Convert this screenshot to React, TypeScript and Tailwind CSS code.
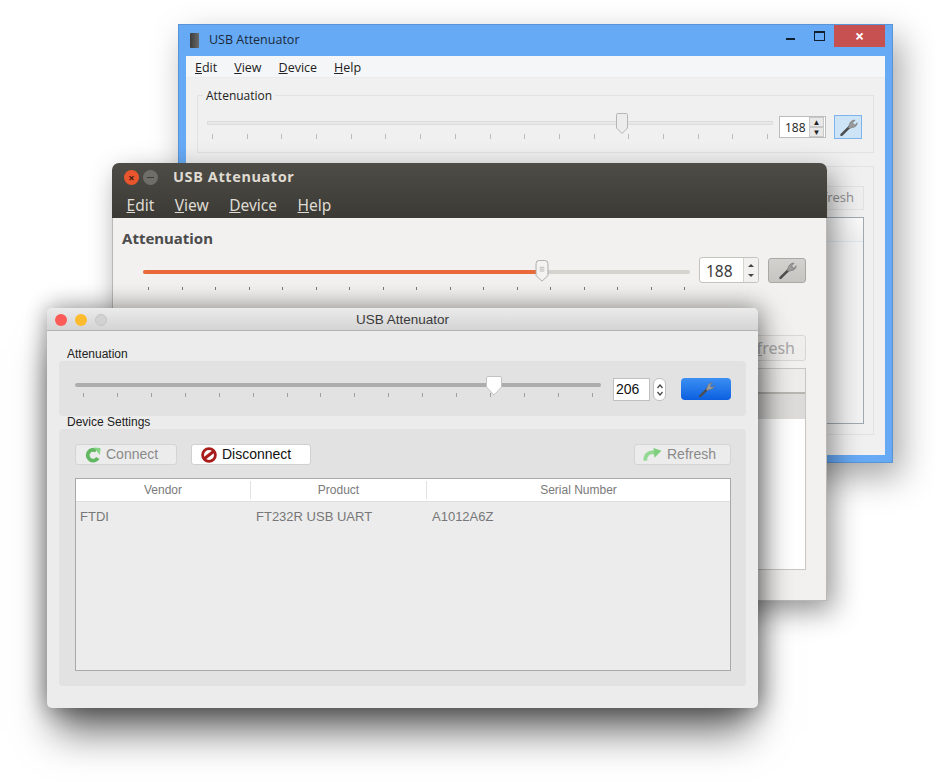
import React from 'react';

const WIN = { fontFamily: '"Open Sans", "Noto Sans", sans-serif' };
const UBUNTU = { fontFamily: '"Noto Sans", "Open Sans", sans-serif' };
const MAC = { fontFamily: '"Liberation Sans", Arial, sans-serif' };

function Ticks({ count, className, tick }: { count: number; className: string; tick: string }) {
  return (
    <div className={`flex justify-between ${className}`}>
      {Array.from({ length: count }).map((_, i) => (
        <div key={i} className={tick} />
      ))}
    </div>
  );
}

function WrenchIcon({ className = '' }: { className?: string }) {
  return (
    <svg viewBox="0 0 24 24" className={className}>
      <path d="M13.5 11 L4 20.5" stroke="#4d4d4d" strokeWidth="3" strokeLinecap="round" />
      <path
        d="M11.5 12 L13 8.5 C13.5 5.5 16 3.5 19.5 3.5 L17 6.5 L17.5 8.5 L19.5 9 L22 6.5 C22 9.5 19.5 12 16 12 L13 13.5 Z"
        fill="#9a9a9a"
        stroke="#5c5c5c"
        strokeWidth="0.5"
      />
    </svg>
  );
}

function ConnectIcon({ className = '' }: { className?: string }) {
  return (
    <svg viewBox="0 0 16 16" className={className}>
      <path d="M12.8 11 A5.4 5.4 0 1 1 11.2 3.8" fill="none" stroke="#62b862" strokeWidth="3.8" />
      <path d="M8.5 0.5 L15.5 1 L15 8 Z" fill="#86d386" />
    </svg>
  );
}

function RefreshIcon({ className = '' }: { className?: string }) {
  return (
    <svg viewBox="0 0 20 16" className={className}>
      <path d="M2.5 14 C2 8 6 4.5 12 5.5" fill="none" stroke="#93d993" strokeWidth="4" />
      <path d="M11 0.5 L19.5 3.5 L12 11 Z" fill="#7fcf7f" />
    </svg>
  );
}

function NoEntryIcon({ className = '' }: { className?: string }) {
  return (
    <svg viewBox="0 0 16 16" className={className}>
      <circle cx="8" cy="8" r="6.4" fill="#fff" stroke="#a81c1c" strokeWidth="2.8" />
      <path d="M3.5 11.5 L12.5 4.5" stroke="#a81c1c" strokeWidth="3" />
    </svg>
  );
}

function WindowsWindow() {
  return (
    <div
      style={WIN}
      className="absolute left-[178px] top-[24px] flex h-[439px] w-[715px] flex-col border border-[#5a93d6] bg-[#66a9f5] px-[7px] pb-[7px] shadow-[8px_14px_32px_rgba(0,0,0,0.35)]"
    >
      <div className="flex h-[31px] shrink-0 items-center">
        <div className="ml-[4px] h-[15px] w-[9px] rounded-[1px] bg-gradient-to-r from-[#3c3c3c] to-[#6a6a6a]" />
        <span className="ml-[10px] text-[12.5px] text-[#1a2a3a]">USB Attenuator</span>
        <div className="ml-auto flex items-start self-start">
          <div className="mr-[19px] mt-[13px] h-[2px] w-[9px] bg-[#10202f]" />
          <div className="mr-[9px] mt-[6px] h-[10px] w-[11px] border border-t-2 border-[#10202f]" />
          <div className="flex h-[22px] w-[51px] items-center justify-center bg-[#c75050] text-[16px] font-bold leading-none text-white">
            ×
          </div>
        </div>
      </div>
      <div className="flex min-h-0 flex-1 flex-col bg-[#f0f0f0]">
        <div className="flex h-[22px] shrink-0 items-center gap-[17px] border-b border-[#ececec] bg-[#f5f6f7] pl-[9px] pt-[3px] text-[12.5px] text-[#222]">
          <span><u>E</u>dit</span>
          <span><u>V</u>iew</span>
          <span><u>D</u>evice</span>
          <span><u>H</u>elp</span>
        </div>
        <div className="flex flex-1 flex-col gap-[13px] px-[11px] pb-[20px] pt-[17px]">
          <div className="relative flex h-[58px] shrink-0 items-start border border-[#e2e2e2] pl-[9px] pr-[11px] pt-[25px]">
            <span className="absolute -top-[8px] left-[5px] bg-[#f0f0f0] px-[3px] text-[12px] leading-[16px] text-[#222]">
              Attenuation
            </span>
            <div className="relative flex-1">
              <div className="h-[4px] border border-[#dcdcdc] bg-[#e8e8e8]" />
              <svg viewBox="0 0 12 21" className="absolute -top-[8px] left-[409px] h-[21px] w-[12px]">
                <path d="M0.5 1.5 Q0.5 0.5 1.5 0.5 H10.5 Q11.5 0.5 11.5 1.5 V15 L6 20.5 L0.5 15 Z" fill="#ececec" stroke="#b5b5b5" />
              </svg>
              <Ticks count={17} className="ml-[5px] mr-[5px] mt-[9px]" tick="h-[5px] w-px bg-[#bdbdb5]" />
            </div>
            <div className="-mt-[5px] ml-[6px] flex h-[22px] w-[47px] items-center border border-[#bcbcbc] bg-white pl-[5px] text-[12px] text-[#222]">
              <span className="pt-px">188</span>
              <div className="ml-auto mr-[1px] flex flex-col">
                <div className="flex h-[10px] w-[15px] items-center justify-center border border-[#c8c8c8] bg-[#e8e8e8] text-[8px] leading-none">▲</div>
                <div className="flex h-[10px] w-[15px] items-center justify-center border border-[#c8c8c8] bg-[#e8e8e8] text-[8px] leading-none">▼</div>
              </div>
            </div>
            <div className="-mt-[6px] ml-[8px] flex h-[24px] w-[28px] items-center justify-center border border-[#7eb4ea] bg-[#cde4f7]">
              <WrenchIcon className="h-[21px] w-[21px]" />
            </div>
          </div>
          <div className="flex min-h-0 flex-1 flex-col items-end border border-[#e2e2e2] pr-[9px] pt-[19px]">
            <div className="flex h-[24px] w-[100px] items-center justify-end border border-[#e2e2e2] bg-[#efefef] pr-[9px] text-[13px] text-[#8c8c8c]">
              Re<u>f</u>resh
            </div>
            <div className="mb-[10px] mt-[7px] flex w-[200px] flex-1 flex-col border border-[#a0a8b0] bg-[#f2f2f2]">
              <div className="h-[24px] border-b border-[#dde6f0] bg-gradient-to-b from-[#fafafa] to-[#f0f0f0]" />
            </div>
          </div>
        </div>
      </div>
    </div>
  );
}

function UbuntuWindow() {
  return (
    <div
      style={UBUNTU}
      className="absolute left-[112px] top-[163px] flex h-[438px] w-[715px] flex-col rounded-t-[7px] bg-[#f2f1f0] shadow-[6px_10px_28px_rgba(0,0,0,0.42)]"
    >
      <div className="h-[55px] shrink-0 rounded-t-[7px] bg-gradient-to-b from-[#4e4c46] to-[#3b3a35] text-[#dfdbd2]">
        <div className="flex h-[28px] items-center pl-[12px]">
          <div className="flex h-[15px] w-[15px] items-center justify-center rounded-full bg-[#e9562d] text-[11px] font-bold leading-none text-[#4a2016]">
            ×
          </div>
          <div className="ml-[4px] flex h-[15px] w-[15px] items-center justify-center rounded-full bg-[#6f6e69]">
            <div className="h-px w-[7px] bg-[#3b3a35]" />
          </div>
          <span className="ml-[15px] text-[14.5px] font-bold tracking-[0.6px]">USB Attenuator</span>
        </div>
        <div className="flex items-center gap-[20.5px] pl-[14.5px] pt-px text-[15.5px] leading-[26px]">
          <span><u>E</u>dit</span>
          <span><u>V</u>iew</span>
          <span><u>D</u>evice</span>
          <span><u>H</u>elp</span>
        </div>
      </div>
      <div className="flex min-h-0 flex-1 flex-col border-x border-b border-[#b9b8b5] pb-[30px] pl-[9px] pr-[20px] pt-[10px]">
        <div className="text-[15px] font-bold leading-[20px] text-[#4c4c4c]">Attenuation</div>
        <div className="mt-[22px] flex items-start">
          <div className="relative ml-[21px] w-[547px]">
            <div className="flex h-[4px] rounded-full bg-[#d5d3ce]">
              <div className="h-[4px] w-[399px] rounded-full bg-[#e9693a]" />
            </div>
            <svg viewBox="0 0 14 24" className="absolute -top-[10px] left-[392px] h-[22px] w-[14px]">
              <path d="M0.5 4 Q0.5 0.5 4 0.5 H10 Q13.5 0.5 13.5 4 V17 L7 23 L0.5 17 Z" fill="#f4f3f1" stroke="#a9a7a2" />
              <path d="M4.5 8 H9.5 M4.5 10 H9.5 M4.5 12 H9.5" stroke="#a9a7a2" strokeWidth="0.8" />
            </svg>
            <Ticks count={17} className="ml-[5px] mr-[5px] mt-[13px]" tick="h-[3px] w-px bg-[#777]" />
          </div>
          <div className="-mt-[13px] ml-[9px] flex h-[26px] w-[60px] rounded-[3px] border border-[#c5c3be] bg-white text-[15.5px] text-[#3c3c3c]">
            <div className="flex w-[43px] items-center pl-[6px] pt-[3px]">188</div>
            <div className="flex flex-1 flex-col items-center justify-center gap-[7px] rounded-r-[3px] border-l border-[#d6d4cf] bg-[#f2f1f0]">
              <div className="h-0 w-0 border-x-[3px] border-b-[3px] border-x-transparent border-b-[#444]" />
              <div className="h-0 w-0 border-x-[3px] border-t-[3px] border-x-transparent border-t-[#444]" />
            </div>
          </div>
          <div className="-mt-[12px] ml-[9px] flex h-[25px] w-[38px] items-center justify-center rounded-[3px] border border-[#aaa8a3] bg-gradient-to-b from-[#d2d1cd] to-[#c6c5c1]">
            <WrenchIcon className="h-[21px] w-[21px]" />
          </div>
        </div>
        <div className="flex flex-1 flex-col items-end pt-[45px]">
          <div className="flex h-[26px] w-[100px] shrink-0 items-center justify-end rounded-[3px] border border-[#d9d7d2] bg-[#efeeec] pr-[10px] text-[16px] text-[#a8a8a8]">
            Re<u>f</u>resh
          </div>
          <div className="mt-[7px] flex w-[100px] flex-1 flex-col border border-[#c9c7c2] bg-white">
            <div className="h-[25px] shrink-0 border-b-2 border-[#b9b7b2] bg-[#eeedeb]" />
            <div className="h-[25px] shrink-0 bg-[#dddcda]" />
          </div>
        </div>
      </div>
    </div>
  );
}

function MacWindow() {
  return (
    <div
      style={MAC}
      className="absolute left-[47px] top-[308px] flex h-[400px] w-[711px] flex-col rounded-[5px] bg-[#ececec] shadow-[0_0_22px_rgba(0,0,0,0.32),6px_2px_30px_rgba(0,0,0,0.22),0_32px_38px_-8px_rgba(0,0,0,0.55)]"
    >
      <div className="relative flex h-[23px] shrink-0 items-center justify-center rounded-t-[5px] border-b border-[#b4b4b4] bg-gradient-to-b from-[#ebebeb] to-[#d4d4d4] pt-[3px] text-[13.5px] text-[#3a3a3a]">
        <div className="absolute left-[8px] top-[6px] flex gap-[8px]">
          <div className="h-[12px] w-[12px] rounded-full bg-[#fc5b57]" />
          <div className="h-[12px] w-[12px] rounded-full bg-[#fdbc2e]" />
          <div className="h-[12px] w-[12px] rounded-full border border-[#c4c4c4] bg-[#d2d2d2]" />
        </div>
        USB Attenuator
      </div>
      <div className="flex min-h-0 flex-1 flex-col px-[12px] pb-[22px] pt-[16px]">
        <div className="pl-[8px] text-[12px] leading-[14px] text-[#222]">Attenuation</div>
        <div className="flex h-[55px] shrink-0 items-start rounded-[4px] bg-[#e2e2e2] pl-[16px] pr-[15px] pt-[22px]">
          <div className="relative w-[526px]">
            <div className="h-[4px] rounded-full bg-[#adadad]" />
            <svg viewBox="0 0 16 20" className="absolute -top-[7px] left-[411px] h-[20px] w-[16px]">
              <path d="M0.5 2 Q0.5 0.5 2 0.5 H14 Q15.5 0.5 15.5 2 V11 L8 19 L0.5 11 Z" fill="#fff" stroke="#c2c2c2" />
            </svg>
            <Ticks count={16} className="ml-[8px] mr-[8px] mt-[6px]" tick="h-[4px] w-px bg-[#a0a0a0]" />
          </div>
          <div className="-mt-[5px] ml-[12px] flex h-[23px] w-[37px] items-center border border-[#c0c0c0] bg-white pl-[2px] text-[14px] text-[#111]">
            206
          </div>
          <div className="-mt-[5px] ml-[3px] flex h-[23px] w-[13px] flex-col items-center justify-center rounded-[6px] border border-[#c0c0c0] bg-white text-[#444]">
            <svg viewBox="0 0 8 16" className="h-[16px] w-[8px]" fill="none" stroke="#444" strokeWidth="1.2">
              <path d="M1.5 6 L4 3 L6.5 6 M1.5 10 L4 13 L6.5 10" />
            </svg>
          </div>
          <div className="-mt-[5px] ml-[15px] flex h-[22px] w-[50px] items-center justify-center rounded-[4px] bg-gradient-to-b from-[#3b8ff3] to-[#0a5fe0]">
            <WrenchIcon className="h-[19px] w-[19px]" />
          </div>
        </div>
        <div className="-mt-px pl-[8px] text-[12px] leading-[14px] text-[#222]">Device Settings</div>
        <div className="flex min-h-0 flex-1 flex-col rounded-[4px] bg-[#e2e2e2] pb-[15px] pl-[16px] pr-[15px] pt-[15px]">
          <div className="flex h-[21px] shrink-0 items-center text-[14px]">
            <div className="flex h-[21px] w-[102px] items-center rounded-[3px] border border-[#d4d4d4] bg-[#ececec] pl-[9px] text-[#8a8a8a]">
              <ConnectIcon className="h-[16px] w-[16px]" />
              <span className="ml-[5px]">Connect</span>
            </div>
            <div className="ml-[14px] flex h-[21px] w-[120px] items-center rounded-[3px] border border-[#d0d0d0] bg-white pl-[9px] text-[#111]">
              <NoEntryIcon className="h-[16px] w-[16px]" />
              <span className="ml-[5px]">Disconnect</span>
            </div>
            <div className="ml-auto flex h-[21px] w-[97px] items-center rounded-[3px] border border-[#d4d4d4] bg-[#ececec] pl-[8px] text-[#8a8a8a]">
              <RefreshIcon className="h-[16px] w-[19px]" />
              <span className="ml-[5px]">Refresh</span>
            </div>
          </div>
          <div className="mt-[13px] flex min-h-0 flex-1 flex-col border border-[#a9a9a9] bg-[#ececec]">
            <div className="flex h-[23px] shrink-0 items-center border-b border-[#dedede] bg-white text-[12px] text-[#7a7a7a]">
              <div className="w-[175px] border-r border-[#e2e2e2] text-center leading-[18px]">Vendor</div>
              <div className="w-[176px] border-r border-[#e2e2e2] text-center leading-[18px]">Product</div>
              <div className="flex-1 text-center leading-[18px]">Serial Number</div>
            </div>
            <div className="flex h-[26px] items-center pt-[3px] text-[13px] text-[#777]">
              <div className="w-[176px] pl-[4px]">FTDI</div>
              <div className="w-[176px] pl-[4px]">FT232R USB UART</div>
              <div className="pl-[4px]">A1012A6Z</div>
            </div>
          </div>
        </div>
      </div>
    </div>
  );
}

export default function App() {
  return (
    <div className="relative h-[782px] w-[936px] overflow-hidden bg-white">
      <WindowsWindow />
      <UbuntuWindow />
      <MacWindow />
    </div>
  );
}
